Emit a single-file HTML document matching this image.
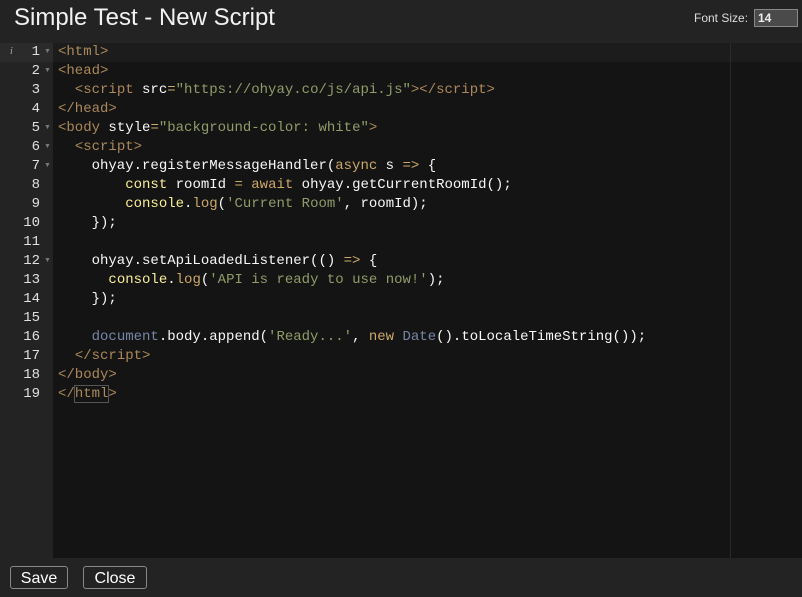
<!DOCTYPE html>
<html><head><style>
body{margin:0;width:802px;height:597px;background:#232323;overflow:hidden;font-family:"Liberation Sans",sans-serif;color:#f0f0f0;position:relative}
.title{position:absolute;left:14px;top:4px;font-size:24px;color:#f2f2f2}
.fs{position:absolute;left:694px;top:11px;font-size:12px;color:#ddd}
.inp{position:absolute;left:754px;top:9px;width:39px;height:16px;background:#4a4a4a;border:1px solid #888;font-size:12px;font-weight:bold;color:#eee;line-height:16px;padding-left:3px;box-sizing:content-box}
.ed{position:absolute;left:0;top:43px;width:802px;height:515px;background:#141414}
.gut{position:absolute;left:0;top:0;width:53px;height:515px;background:#232323}
.act{position:absolute;left:0;top:0;width:802px;height:19px;background:#1c1c1c}
.actg{position:absolute;left:0;top:0;width:53px;height:19px;background:#2b2b2b}
.pm{position:absolute;left:730px;top:0;width:1px;height:515px;background:#2a2a2a}
.ln{position:absolute;left:0;top:0;width:40px;font-family:"Liberation Mono",monospace;font-size:14px;line-height:19px;color:#e0e0e0;text-align:right}
.code{position:absolute;left:58px;top:0;font-family:"Liberation Mono",monospace;font-size:14px;line-height:19px;color:#f8f8f8;white-space:pre}
.t{color:#ac885b}.k{color:#cda869}.s{color:#8f9d6a}.y{color:#f9ee98}.b{color:#7587a6}
.fold{position:absolute;left:44px;font-size:7px;color:#777}
.btn{position:absolute;top:566px;height:23px;border:1px solid #888;border-radius:3px;font-size:16px;line-height:23px;text-align:center;color:#fff;box-sizing:border-box}
</style></head><body>
<div class="title">Simple Test - New Script</div>
<div class="fs">Font Size:</div>
<div class="inp">14</div>
<div class="ed">
<div class="gut"></div>
<div class="act"></div><div class="actg"></div>
<div class="pm"></div>
<div style="position:absolute;left:10px;top:3px;font-size:10px;color:#aaa;font-style:italic;font-family:'Liberation Serif',serif">i</div>
<div class="ln">1<br>2<br>3<br>4<br>5<br>6<br>7<br>8<br>9<br>10<br>11<br>12<br>13<br>14<br>15<br>16<br>17<br>18<br>19</div>
<div class="fold" style="top:5px">▼</div><div class="fold" style="top:24px">▼</div><div class="fold" style="top:81px">▼</div><div class="fold" style="top:100px">▼</div><div class="fold" style="top:119px">▼</div><div class="fold" style="top:214px">▼</div>
<div class="code"><span class="t">&lt;html&gt;</span>
<span class="t">&lt;head&gt;</span>
  <span class="t">&lt;script</span> src<span class="k">=</span><span class="s">"https://ohyay.co/js/api.js"</span><span class="t">&gt;&lt;/script&gt;</span>
<span class="t">&lt;/head&gt;</span>
<span class="t">&lt;body</span> style<span class="k">=</span><span class="s">"background-color: white"</span><span class="t">&gt;</span>
  <span class="t">&lt;script&gt;</span>
    ohyay.registerMessageHandler(<span class="k">async</span> s <span class="k">=&gt;</span> {
        <span class="y">const</span> roomId <span class="k">=</span> <span class="k">await</span> ohyay.getCurrentRoomId();
        <span class="y">console</span>.<span class="k">log</span>(<span class="s">'Current Room'</span>, roomId);
    });

    ohyay.setApiLoadedListener(() <span class="k">=&gt;</span> {
      <span class="y">console</span>.<span class="k">log</span>(<span class="s">'API is ready to use now!'</span>);
    });

    <span class="b">document</span>.body.append(<span class="s">'Ready...'</span>, <span class="k">new</span> <span class="b">Date</span>().toLocaleTimeString());
  <span class="t">&lt;/script&gt;</span>
<span class="t">&lt;/body&gt;</span>
<span class="t">&lt;/<span style="outline:1px solid #555">html</span>&gt;</span></div>
</div>
<div class="btn" style="left:10px;width:58px">Save</div>
<div class="btn" style="left:83px;width:64px">Close</div>
</body></html>
